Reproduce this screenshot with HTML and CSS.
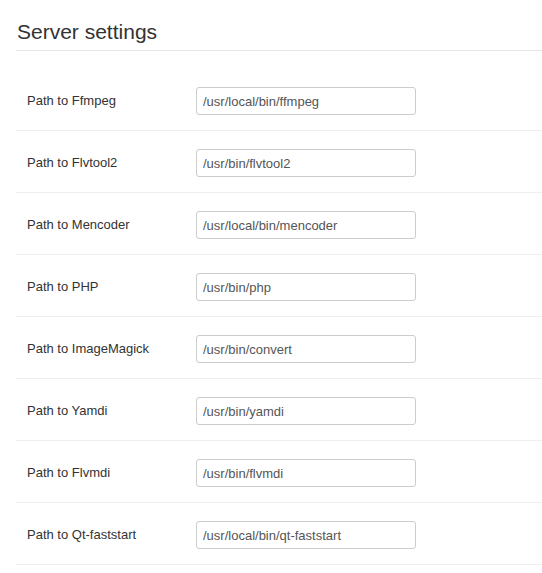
FILE: index.html
```html
<!DOCTYPE html>
<html lang="en">
<head>
  <meta charset="UTF-8">
  <title>Server settings</title>
  <meta name="viewport" content="width=device-width, initial-scale=1.0">
  <link rel="stylesheet" href="styles.css">
</head>
<body>
  <div class="settings">
    <h2 class="settings-title">Server settings</h2>

    <div class="rows">
      <div class="row">
        <label for="ffmpeg">Path to Ffmpeg</label>
        <input type="text" id="ffmpeg" value="/usr/local/bin/ffmpeg">
      </div>
      <div class="row">
        <label for="flvtool2">Path to Flvtool2</label>
        <input type="text" id="flvtool2" value="/usr/bin/flvtool2">
      </div>
      <div class="row">
        <label for="mencoder">Path to Mencoder</label>
        <input type="text" id="mencoder" value="/usr/local/bin/mencoder">
      </div>
      <div class="row">
        <label for="php">Path to PHP</label>
        <input type="text" id="php" value="/usr/bin/php">
      </div>
      <div class="row">
        <label for="imagick">Path to ImageMagick</label>
        <input type="text" id="imagick" value="/usr/bin/convert">
      </div>
      <div class="row">
        <label for="yamdi">Path to Yamdi</label>
        <input type="text" id="yamdi" value="/usr/bin/yamdi">
      </div>
      <div class="row">
        <label for="flvmdi">Path to Flvmdi</label>
        <input type="text" id="flvmdi" value="/usr/bin/flvmdi">
      </div>
      <div class="row">
        <label for="qtfs">Path to Qt-faststart</label>
        <input type="text" id="qtfs" value="/usr/local/bin/qt-faststart">
      </div>
    </div>
  </div>
</body>
</html>
```

FILE: styles.css
```css
* {
  box-sizing: border-box;
}
html, body {
  margin: 0;
  padding: 0;
  background: #fff;
  font-family: "Liberation Sans", Arial, sans-serif;
  font-size: 13px;
  color: #333;
}

.settings {
  margin: 17px 0 0 16px;
}

.settings-title {
  margin: 0 0 18px 0;
  padding: 0 0 3px 1px;
  font-size: 21px;
  font-weight: normal;
  line-height: 30px;
  color: #333;
  border-bottom: 1px solid #e5e5e5;
}

.rows {
  display: flex;
  flex-direction: column;
}

.row {
  display: flex;
  align-items: center;
  padding: 18px 0 15px 11px;
  border-bottom: 1px solid #eee;
}

.row label {
  width: 169px;
  line-height: 20px;
}

.row input {
  width: 220px;
  height: 28px;
  padding: 0 6px;
  font-family: "Liberation Sans", Arial, sans-serif;
  font-size: 13px;
  color: #555;
  background: #fff;
  border: 1px solid #ccc;
  border-radius: 3px;
  outline: none;
}
```
